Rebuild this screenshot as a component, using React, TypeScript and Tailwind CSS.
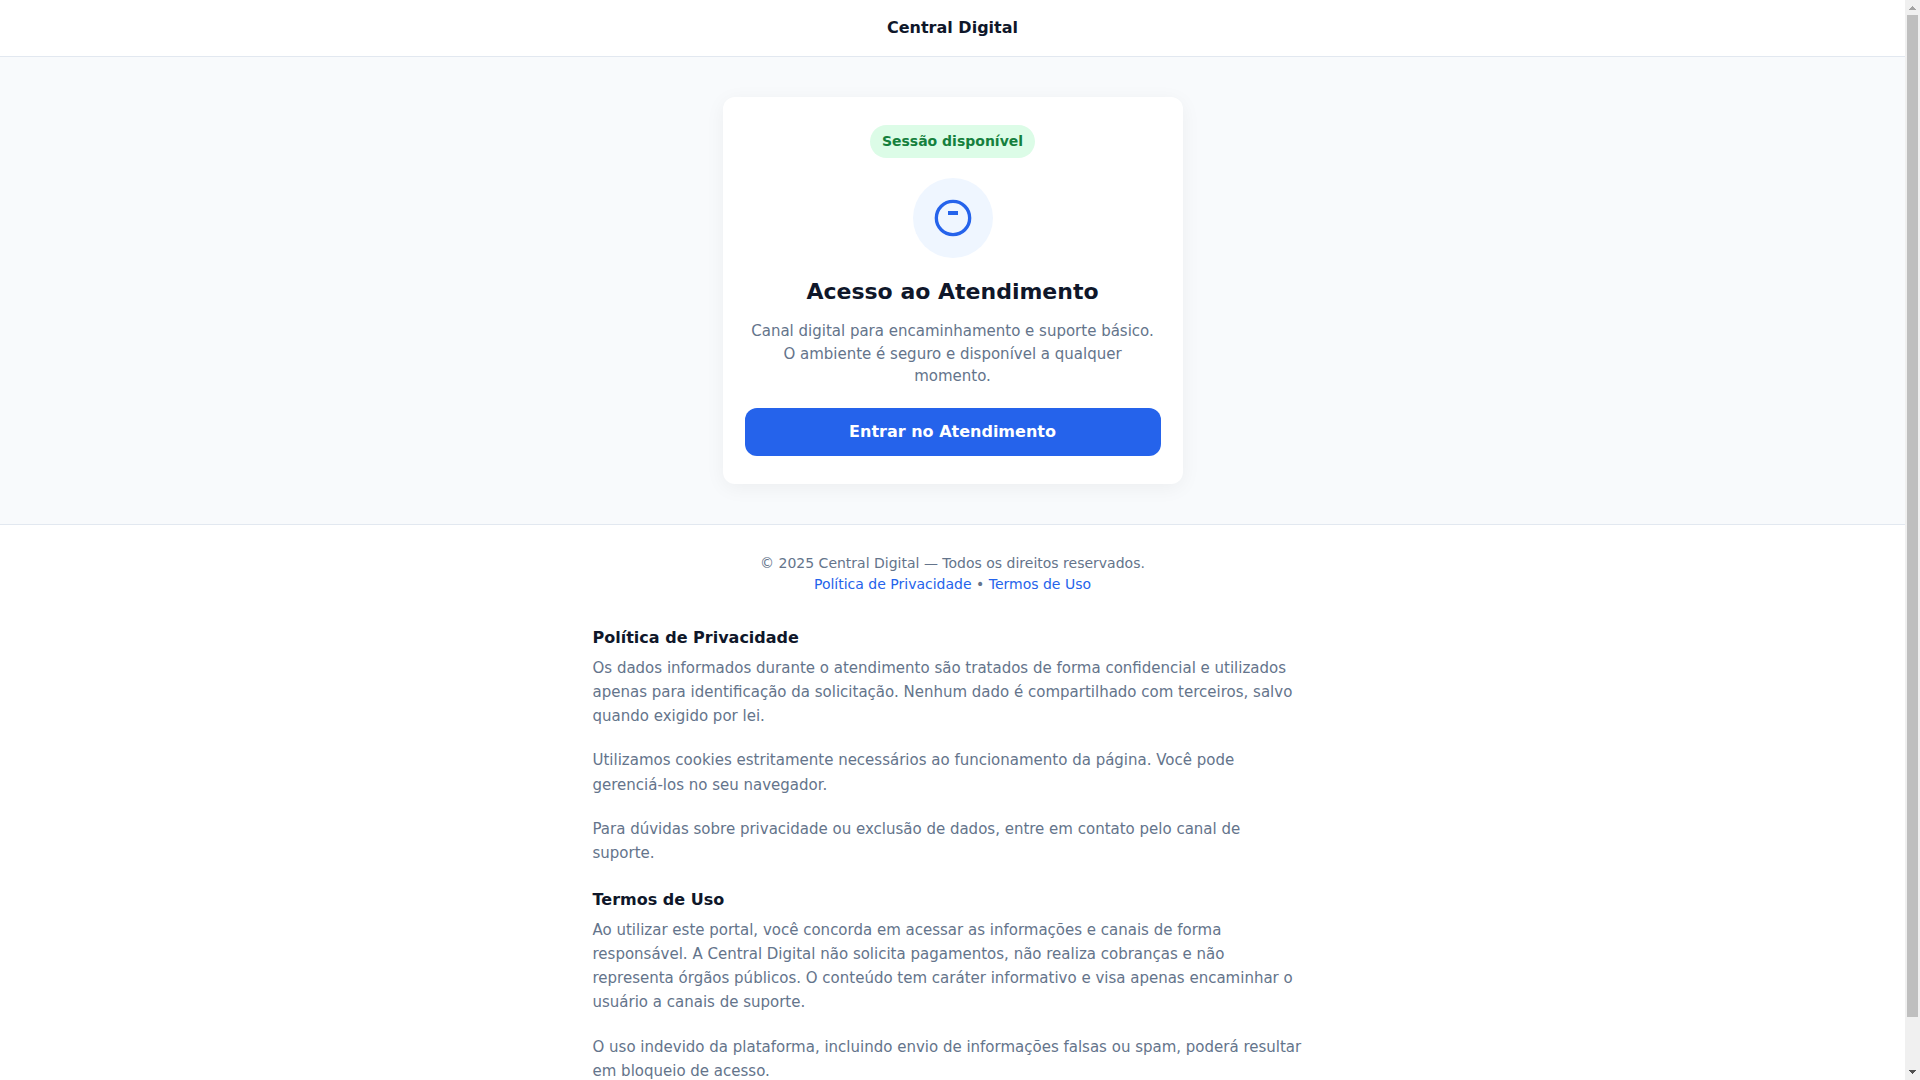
type LegalSection = {
  id: string;
  title: string;
  paragraphs: string[];
};

const legalSections: LegalSection[] = [
  {
    id: "privacidade",
    title: "Política de Privacidade",
    paragraphs: [
      "Os dados informados durante o atendimento são tratados de forma confidencial e utilizados apenas para identificação da solicitação. Nenhum dado é compartilhado com terceiros, salvo quando exigido por lei.",
      "Utilizamos cookies estritamente necessários ao funcionamento da página. Você pode gerenciá-los no seu navegador.",
      "Para dúvidas sobre privacidade ou exclusão de dados, entre em contato pelo canal de suporte.",
    ],
  },
  {
    id: "termos",
    title: "Termos de Uso",
    paragraphs: [
      "Ao utilizar este portal, você concorda em acessar as informações e canais de forma responsável. A Central Digital não solicita pagamentos, não realiza cobranças e não representa órgãos públicos. O conteúdo tem caráter informativo e visa apenas encaminhar o usuário a canais de suporte.",
      "O uso indevido da plataforma, incluindo envio de informações falsas ou spam, poderá resultar em bloqueio de acesso.",
    ],
  },
];

const AccessCard = () => (
  <div className="w-full max-w-[460px] rounded-xl bg-white px-[22px] py-7 text-center shadow-[0_4px_20px_rgba(0,0,0,0.05)]">
    <span className="inline-block rounded-[20px] bg-[#dcfce7] px-3 py-[6px] align-top text-sm leading-[21px] font-semibold text-[#15803d]">
      Sessão disponível
    </span>

    <div className="mx-auto mt-5 flex size-20 items-center justify-center rounded-full bg-[#eff6ff]">
      <svg className="size-10" viewBox="0 0 24 24" fill="none" stroke="#2563eb" strokeWidth="2" aria-hidden="true">
        <circle cx="12" cy="12" r="10" />
        <path d="M9 9h6" strokeWidth="2.4" />
      </svg>
    </div>

    <h1 className="mt-[18px] text-[22px] leading-8 font-bold text-[#0f172a]">Acesso ao Atendimento</h1>
    <p className="mt-3 text-[15px] leading-normal text-[#64748b]">
      Canal digital para encaminhamento e suporte básico. O ambiente é seguro e disponível a qualquer momento.
    </p>

    <button type="button" className="mt-5 h-12 w-full rounded-xl bg-[#2563eb] text-base font-semibold text-white">
      Entrar no Atendimento
    </button>
  </div>
);

const Scrollbar = () => (
  <div className="flex w-[15px] shrink-0 flex-col items-center bg-[#f0f0f0]" aria-hidden="true">
    <svg className="h-[15px] w-[15px] shrink-0" viewBox="0 0 15 15" fill="#a3a3a3" shapeRendering="crispEdges">
      <path d="M7 6h1v1h1v1h1v1h1v1H4V9h1V8h1V7h1z" />
    </svg>
    <div className="flex w-full flex-1 justify-center">
      <div className="h-[95.4%] w-[11px] bg-[#bfbfbf]" />
    </div>
    <svg className="h-[15px] w-[15px] shrink-0" viewBox="0 0 15 15" fill="#505050" shapeRendering="crispEdges">
      <path d="M4 5h7v1h-1v1H9v1H8v1H7V8H6V7H5V6H4z" />
    </svg>
  </div>
);

const App = () => {
  return (
    <div className="flex h-screen overflow-hidden bg-white font-['DejaVu_Sans',sans-serif]">
      <div className="min-w-0 flex-1 overflow-hidden">
        {/* Header */}
        <header className="border-b border-[#e2e8f0] bg-white p-4 text-center text-base font-semibold text-[#0f172a]">
          Central Digital
        </header>

        {/* Access card */}
        <main className="flex justify-center bg-[#f8fafc] px-5 py-10">
          <AccessCard />
        </main>

        {/* Footer */}
        <footer className="border-t border-[#e2e8f0] px-5 pt-7 text-center text-sm leading-[21px] text-[#64748b]">
          <p>© 2025 Central Digital — Todos os direitos reservados.</p>
          <p>
            <a href="#privacidade" className="text-[#2563eb]">
              Política de Privacidade
            </a>{" "}
            •{" "}
            <a href="#termos" className="text-[#2563eb]">
              Termos de Uso
            </a>
          </p>
        </footer>

        {/* Legal texts */}
        <div className="mx-auto mt-[31px] flex max-w-[760px] flex-col gap-[22px] pr-7 pb-7 pl-5">
          {legalSections.map((section) => (
            <section key={section.id} id={section.id}>
              <h2 className="mb-[6px] text-base font-semibold text-[#0f172a]">{section.title}</h2>
              <div className="flex flex-col gap-5 text-[15px] leading-[1.62] text-[#64748b]">
                {section.paragraphs.map((text) => (
                  <p key={text}>{text}</p>
                ))}
              </div>
            </section>
          ))}
        </div>
      </div>
      <Scrollbar />
    </div>
  );
};

export default App;
